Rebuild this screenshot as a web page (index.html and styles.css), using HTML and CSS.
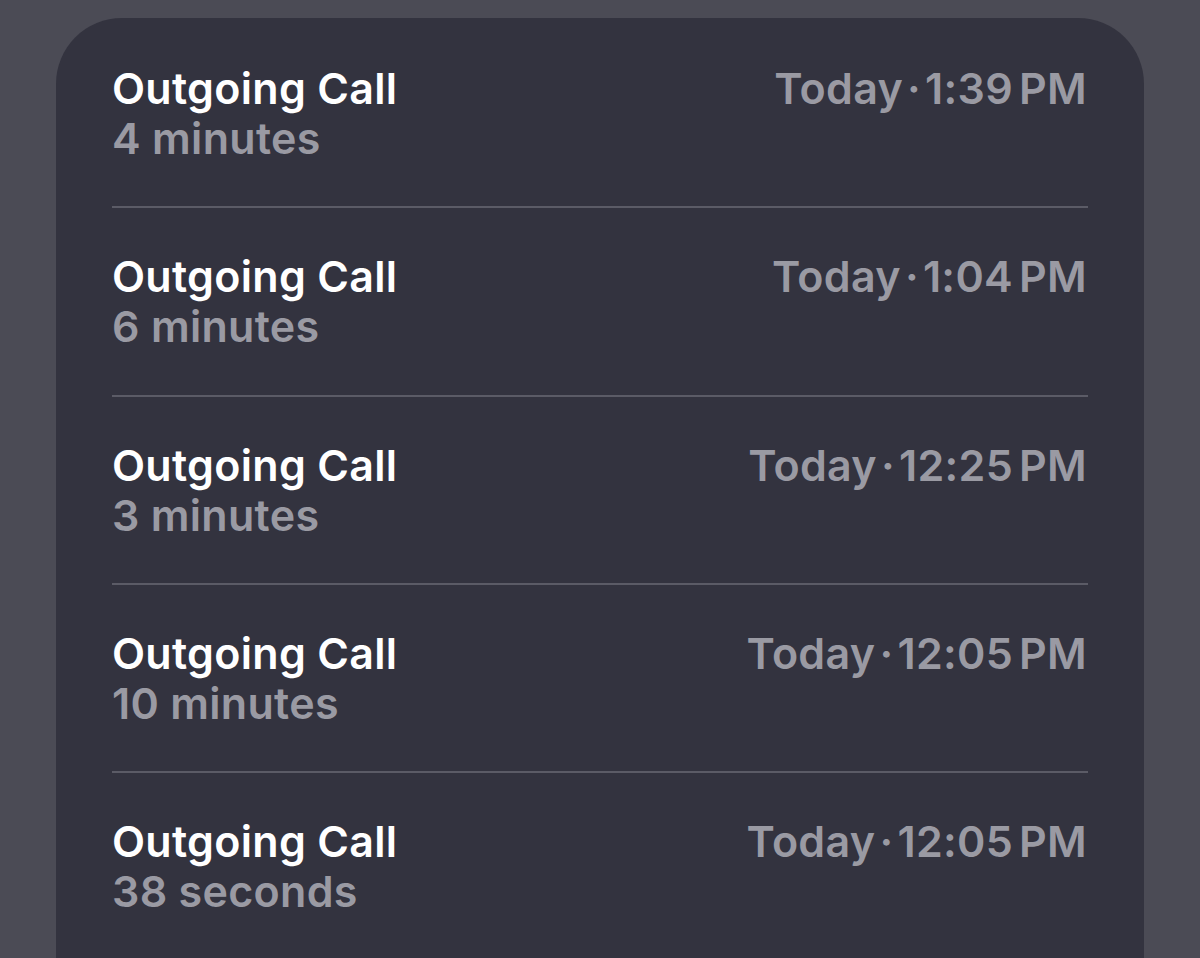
FILE: index.html
```html
<!DOCTYPE html>
<html lang="en">
<head>
    <meta charset="UTF-8">
    <meta name="viewport" content="width=device-width, initial-scale=1.0">
    <title>Recents</title>
    <link rel="stylesheet" href="styles.css">
</head>
<body>
    <div class="card">
        <div class="call-row">
            <div class="call-info">
                <div class="call-title">Outgoing Call</div>
                <div class="call-length">4 minutes</div>
            </div>
            <div class="call-time">Today<span class="dot">·</span>1:39<span class="gap"></span>PM</div>
        </div>
        <div class="call-row">
            <div class="call-info">
                <div class="call-title">Outgoing Call</div>
                <div class="call-length">6 minutes</div>
            </div>
            <div class="call-time">Today<span class="dot">·</span>1:04<span class="gap"></span>PM</div>
        </div>
        <div class="call-row">
            <div class="call-info">
                <div class="call-title">Outgoing Call</div>
                <div class="call-length">3 minutes</div>
            </div>
            <div class="call-time">Today<span class="dot">·</span>12:25<span class="gap"></span>PM</div>
        </div>
        <div class="call-row">
            <div class="call-info">
                <div class="call-title">Outgoing Call</div>
                <div class="call-length">10 minutes</div>
            </div>
            <div class="call-time">Today<span class="dot">·</span>12:05<span class="gap"></span>PM</div>
        </div>
        <div class="call-row">
            <div class="call-info">
                <div class="call-title">Outgoing Call</div>
                <div class="call-length">38 seconds</div>
            </div>
            <div class="call-time">Today<span class="dot">·</span>12:05<span class="gap"></span>PM</div>
        </div>
    </div>
</body>
</html>
```

FILE: styles.css
```css
/* Page */
body {
    margin: 0;
    padding: 18px 56px 0;
    background: #4b4b55;
    font-family: Inter, "Noto Sans", sans-serif;
    height: 958px;
    box-sizing: border-box;
    overflow: hidden;
}

/* Card holding the call list */
.card {
    background: #33333f;
    border-radius: 66px 66px 0 0;
    padding: 2px 56px 0;
    min-height: 1000px;
}

.call-row {
    display: flex;
    justify-content: space-between;
    align-items: flex-start;
    padding: 43px 0 43.3px;
    border-bottom: 2px solid #5b5b66;
}

.call-title,
.call-length,
.call-time {
    font-size: 43px;
    line-height: 50px;
    font-weight: 600;
    letter-spacing: 0.3px;
}

.call-title {
    color: #ffffff;
}

.call-length,
.call-time {
    color: #9a9aa3;
}

.call-time {
    padding-right: 1px;
}

.dot {
    margin: 0 4px;
}

.gap {
    display: inline-block;
    width: 6px;
}
```
